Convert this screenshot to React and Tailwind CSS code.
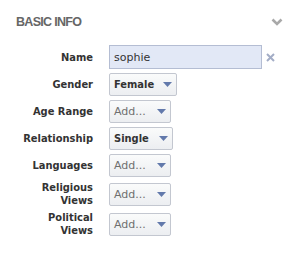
const rows = [
  { label: ["Gender"], value: "Female", selected: true, width: "w-[68px]" },
  { label: ["Age Range"], value: "Add...", selected: false, width: "w-[62px]" },
  { label: ["Relationship"], value: "Single", selected: true, width: "w-[64px]" },
  { label: ["Languages"], value: "Add...", selected: false, width: "w-[62px]" },
  { label: ["Religious", "Views"], value: "Add...", selected: false, width: "w-[62px]" },
  { label: ["Political", "Views"], value: "Add...", selected: false, width: "w-[62px]" }
];

function Arrow() {
  return (
    <svg width="9" height="5" viewBox="0 0 9 5" className="shrink-0">
      <polygon points="0,0 9,0 4.5,5" fill="#6279ab" />
    </svg>
  );
}

function Label({ lines }) {
  return (
    <div className="w-[93px] shrink-0 text-right text-[11px] font-bold leading-[13px] text-[#333]">
      {lines.map((line) => (
        <div key={line}>{line}</div>
      ))}
    </div>
  );
}

function SelectButton({ value, selected, width }) {
  return (
    <button
      className={`flex h-[23px] ${width} items-center justify-between rounded-[2px] border border-[#c3c7d0] bg-[linear-gradient(180deg,#fafbfb_0%,#eceef1_100%)] pl-[4px] pr-[4px] ${
        selected
          ? "text-[11px] font-bold text-[#333]"
          : "font-['DejaVu_Sans',sans-serif] text-[11px] font-normal text-[#6f6f6f]"
      }`}
    >
      <span className="leading-none">{value}</span>
      <Arrow />
    </button>
  );
}

export default function App() {
  return (
    <div className="h-[256px] w-[297px] bg-white font-['DejaVu_Sans_Condensed','DejaVu_Sans',sans-serif]">
      <div className="flex items-center justify-between pl-[16px] pr-[14px] pt-[15px]">
        <h2 className="font-['Liberation_Sans',sans-serif] text-[12.5px] font-bold leading-[14px] tracking-[-0.7px] text-[#666]">
          BASIC INFO
        </h2>
        <svg width="12" height="8" viewBox="0 0 12 8">
          <polyline points="1.5,1.5 6,6 10.5,1.5" fill="none" stroke="#a9a9a9" strokeWidth="2.6" />
        </svg>
      </div>

      <div className="mt-[16px] flex flex-col gap-[4px]">
        <div className="flex items-center gap-[16px]">
          <Label lines={["Name"]} />
          <div className="flex items-center gap-[4px]">
            <input
              defaultValue="sophie"
              className="h-[24px] w-[153px] border border-[#b4bdd3] bg-[#e2e8f6] px-[4px] font-['DejaVu_Sans',sans-serif] text-[11px] text-[#333] outline-none"
            />
            <svg width="9" height="9" viewBox="0 0 9 9">
              <path d="M1 1 L8 8 M8 1 L1 8" stroke="#a3adc6" strokeWidth="2" />
            </svg>
          </div>
        </div>

        {rows.map((row) => (
          <div key={row.label.join(" ")} className="flex items-center gap-[16px]">
            <Label lines={row.label} />
            <SelectButton value={row.value} selected={row.selected} width={row.width} />
          </div>
        ))}
      </div>
    </div>
  );
}
